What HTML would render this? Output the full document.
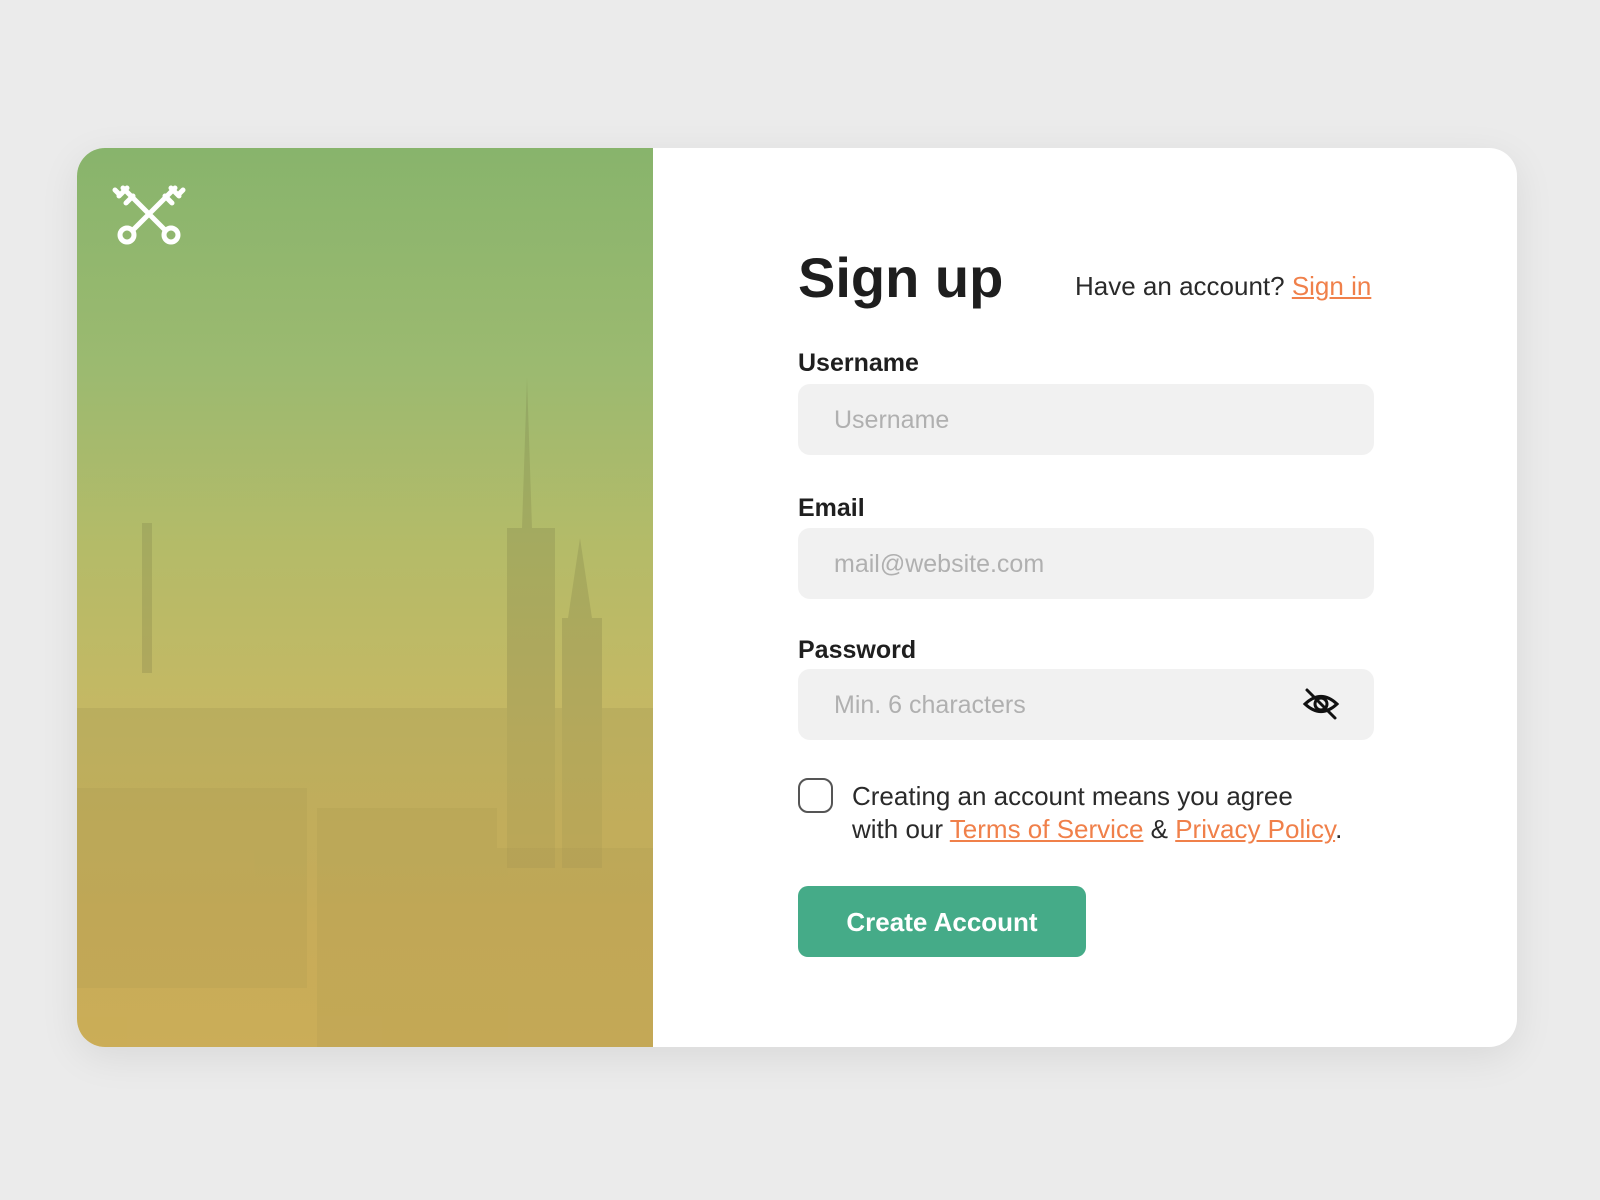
<!DOCTYPE html>
<html><head><meta charset="utf-8"><style>
*{margin:0;padding:0;box-sizing:border-box}
body{width:1600px;height:1200px;background:#ebebeb;font-family:"Liberation Sans",Arial,sans-serif;position:relative;overflow:hidden}
.card{position:absolute;left:77px;top:148px;width:1440px;height:899px;background:#fff;border-radius:28px;overflow:hidden;box-shadow:0 10px 40px rgba(0,0,0,.08)}
.left{position:absolute;left:0;top:0;width:576px;height:899px;background:linear-gradient(180deg,#88b46c 0%,#9cba70 25%,#b5bb68 45%,#c7b863 65%,#d4b65d 85%,#d9b75c 100%)}
.abs{position:absolute}
.lbl{position:absolute;left:721px;font-size:25px;font-weight:bold;color:#1f1f1f}
.inp{position:absolute;left:721px;width:576px;height:71px;background:#f1f1f1;border-radius:12px;font-size:25px;color:#b0b0b0;padding-left:36px;line-height:73px}
a{color:#f0804a;text-decoration:underline}
</style></head><body>
<div class="card">
 <div class="left">
  <svg class="abs" style="left:0;top:0" width="576" height="899" viewBox="0 0 576 899">
   <g fill="#6b6a3e" opacity=".2">
    <polygon points="450,230 455,380 445,380"/>
    <rect x="430" y="380" width="48" height="340"/>
    <polygon points="503,390 515,470 491,470"/>
    <rect x="485" y="470" width="40" height="250"/>
    <rect x="65" y="375" width="10" height="150"/>
    <rect x="0" y="560" width="576" height="339" opacity=".6"/>
   </g>
   <g fill="#8a7e45" opacity=".1">
    <rect x="0" y="640" width="230" height="200"/>
    <rect x="240" y="660" width="180" height="239"/>
    <rect x="420" y="700" width="156" height="199"/>
   </g>
  </svg>
  <svg class="abs" style="left:34px;top:34px" width="76" height="64" viewBox="0 0 76 64" fill="none" stroke="#fff" stroke-width="5" stroke-linecap="round">
   <path d="M12 6 L54 48 M64 6 L22 48"/>
   <path d="M8 14 l8 -8 M15 21 l7 -7 M68 14 l-8-8 M61 21 l-7-7 M4 8 l5 5 M72 8 l-5 5"/>
   <circle cx="16" cy="53" r="7"/><circle cx="60" cy="53" r="7"/>
  </svg>
 </div>
 <div class="abs" style="left:721px;top:97px;font-size:56px;font-weight:bold;color:#1e1e1e">Sign up</div>
 <div class="abs" style="left:998px;top:123px;font-size:26px;color:#2a2a2a">Have an account? <a>Sign in</a></div>
 <div class="lbl" style="top:201px">Username</div>
 <div class="inp" style="top:236px">Username</div>
 <div class="lbl" style="top:346px">Email</div>
 <div class="inp" style="top:380px">mail@website.com</div>
 <div class="lbl" style="top:488px">Password</div>
 <div class="inp" style="top:521px">Min. 6 characters
  <svg class="abs" style="right:34px;top:18px" width="38" height="34" viewBox="0 0 38 34" fill="none" stroke="#111" stroke-width="3" stroke-linecap="round">
   <path d="M3 17 Q19 2 35 17 Q19 32 3 17Z"/><circle cx="19" cy="17" r="6"/><path d="M5 3 L33 31"/>
  </svg>
 </div>
 <div class="abs" style="left:721px;top:630px;width:35px;height:35px;border:2.5px solid #555;border-radius:10px"></div>
 <div class="abs" style="left:775px;top:632px;font-size:26px;line-height:33px;color:#2a2a2a">Creating an account means you agree<br>with our <a>Terms of Service</a> &amp; <a>Privacy Policy</a>.</div>
 <div class="abs" style="left:721px;top:738px;width:288px;height:71px;background:#45ab88;border-radius:10px;color:#fff;font-size:26px;font-weight:bold;text-align:center;line-height:73px">Create Account</div>
</div>
</body></html>
